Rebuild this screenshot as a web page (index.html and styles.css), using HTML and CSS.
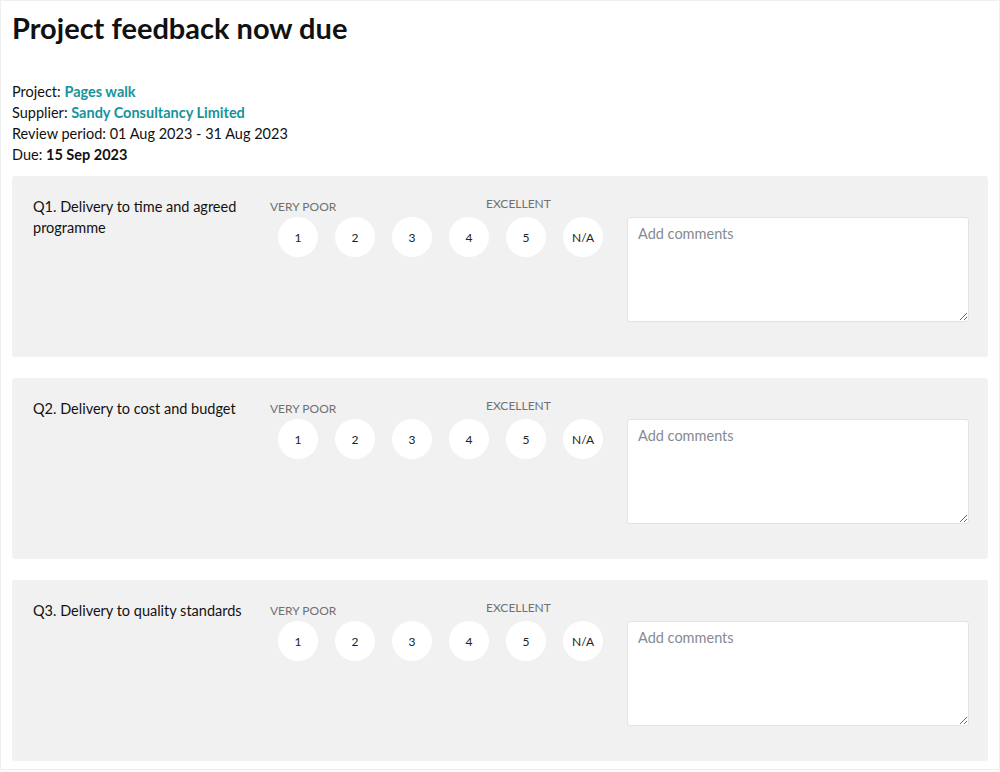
FILE: index.html
```html
<!DOCTYPE html>
<html lang="en">
<head>
    <meta charset="UTF-8">
    <meta name="viewport" content="width=device-width, initial-scale=1.0">
    <title>Project feedback now due</title>
    <link rel="stylesheet" href="styles.css">
</head>
<body>
    <div class="page">
        <h1>Project feedback now due</h1>

        <div class="meta">
            <div>Project: <a href="#" class="link">Pages walk</a></div>
            <div>Supplier: <a href="#" class="link">Sandy Consultancy Limited</a></div>
            <div>Review period: 01 Aug 2023 - 31 Aug 2023</div>
            <div>Due: <strong>15 Sep 2023</strong></div>
        </div>

        <div class="question-card">
            <div class="question">Q1. Delivery to time and agreed programme</div>
            <div class="rating">
                <div class="scale-labels">
                    <span class="label-low">VERY POOR</span>
                    <span class="label-high">EXCELLENT</span>
                </div>
                <div class="scores">
                    <button class="score">1</button>
                    <button class="score">2</button>
                    <button class="score">3</button>
                    <button class="score">4</button>
                    <button class="score">5</button>
                    <button class="score">N/A</button>
                </div>
            </div>
            <textarea class="comments" placeholder="Add comments"></textarea>
        </div>

        <div class="question-card">
            <div class="question">Q2. Delivery to cost and budget</div>
            <div class="rating">
                <div class="scale-labels">
                    <span class="label-low">VERY POOR</span>
                    <span class="label-high">EXCELLENT</span>
                </div>
                <div class="scores">
                    <button class="score">1</button>
                    <button class="score">2</button>
                    <button class="score">3</button>
                    <button class="score">4</button>
                    <button class="score">5</button>
                    <button class="score">N/A</button>
                </div>
            </div>
            <textarea class="comments" placeholder="Add comments"></textarea>
        </div>

        <div class="question-card">
            <div class="question">Q3. Delivery to quality standards</div>
            <div class="rating">
                <div class="scale-labels">
                    <span class="label-low">VERY POOR</span>
                    <span class="label-high">EXCELLENT</span>
                </div>
                <div class="scores">
                    <button class="score">1</button>
                    <button class="score">2</button>
                    <button class="score">3</button>
                    <button class="score">4</button>
                    <button class="score">5</button>
                    <button class="score">N/A</button>
                </div>
            </div>
            <textarea class="comments" placeholder="Add comments"></textarea>
        </div>
    </div>
</body>
</html>
```

FILE: styles.css
```css
body {
    margin: 0;
    font-family: Lato, "Noto Sans", sans-serif;
    color: #111;
    background-color: #fff;
}
.page {
    height: 770px;
    box-sizing: border-box;
    border: 1px solid #efefef;
    padding: 0 11px;
    overflow: hidden;
}
h1 {
    margin: 10px 0 0;
    font-size: 29px;
    line-height: 34px;
    font-weight: 700;
}
.meta {
    margin-top: 36px;
    font-size: 14.5px;
    line-height: 21px;
}
.meta strong {
    font-weight: 700;
}
.link {
    color: #16939b;
    font-weight: 700;
    text-decoration: none;
}
.question-card {
    display: flex;
    align-items: flex-start;
    margin-top: 11px;
    margin-bottom: 21px;
    padding: 20px 19px 35px 21px;
    background-color: #f1f1f1;
    border-radius: 3px;
}
.question {
    width: 217px;
    margin-right: 20px;
    font-size: 14.5px;
    line-height: 21px;
}
.rating {
    width: 333px;
}
.scale-labels {
    display: flex;
    height: 21px;
    font-size: 12px;
    color: #707070;
}
.label-low {
    padding-top: 3px;
    width: 216px;
}
.label-high {
    padding-top: 0;
}
.scores {
    display: flex;
    gap: 17px;
    padding-left: 8px;
}
.score {
    width: 40px;
    height: 40px;
    padding: 0;
    border: none;
    border-radius: 50%;
    background-color: #fff;
    font-family: inherit;
    font-size: 12px;
    color: #222;
    cursor: pointer;
}
.comments {
    flex: 1;
    height: 105px;
    box-sizing: border-box;
    margin-top: 21px;
    margin-left: 24px;
    padding: 5px 10px;
    border: 1px solid #e3e3e3;
    border-radius: 3px;
    font-family: inherit;
    font-size: 14.5px;
    line-height: 21px;
    resize: vertical;
}
.comments::placeholder {
    color: #858b94;
}
```
